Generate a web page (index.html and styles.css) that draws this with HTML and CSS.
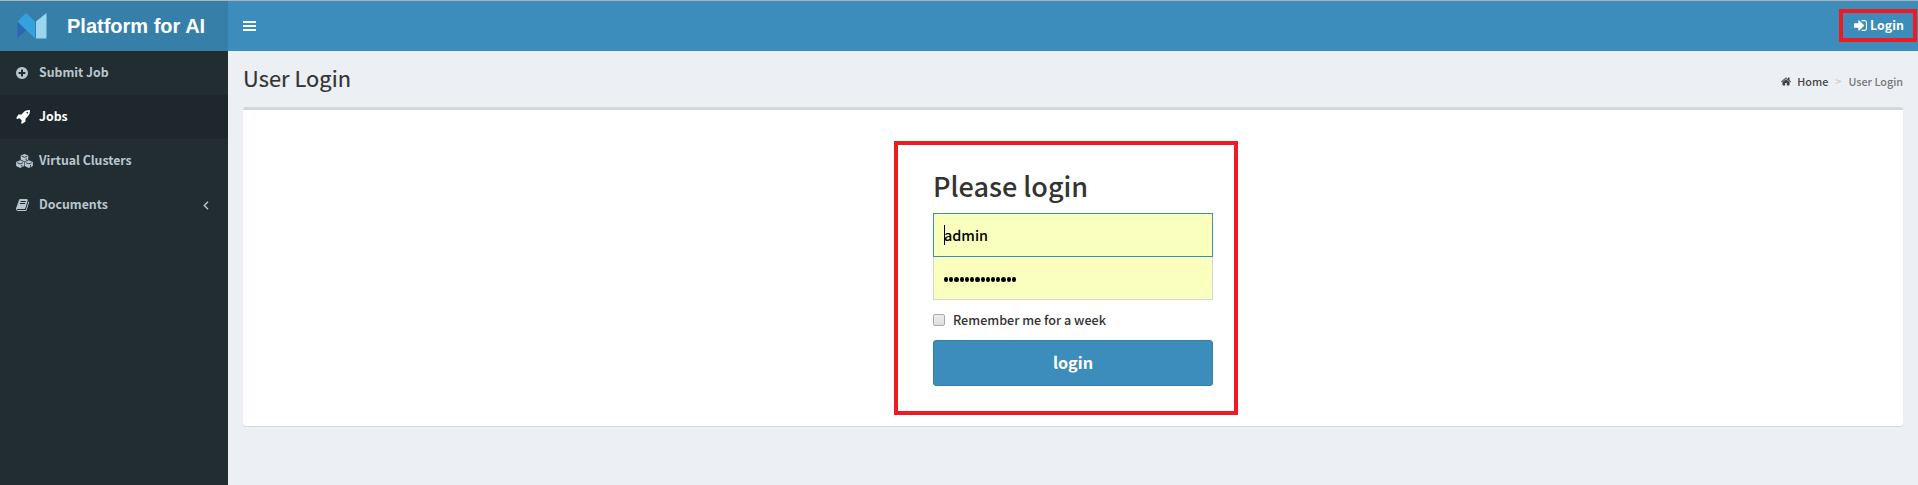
FILE: index.html
```html
<!DOCTYPE html>
<html lang="en">
<head>
<meta charset="utf-8">
<title>Platform for AI</title>
<link rel="stylesheet" href="styles.css">
</head>
<body>
<header class="header">
  <a class="brand">
    <svg class="logo" viewBox="0 0 30 26"><path fill="#2b67b5" d="M.5 8.500 9.500 17 .5 25z"/><path fill="#35a1de" d="M.5 8.500 9 0 18 8.500V25.500L.5 8.500z"/><path fill="#9ad6f0" d="M19 8.500 29.500 0V25.500H19z"/></svg>
    <span class="brand-name">Platform for AI</span>
  </a>
  <nav class="navbar">
    <span class="toggle"><i></i><i></i><i></i></span>
    <a class="login-link"><svg class="signin-icon" viewBox="128 128 1536 1536"><path d="M1312 896q0 26-19 45l-544 544q-19 19-45 19t-45-19-19-45v-288h-448q-26 0-45-19t-19-45v-384q0-26 19-45t45-19h448v-288q0-26 19-45t45-19 45 19l544 544q19 19 19 45zm352-352v704q0 119-84.500 203.500t-203.500 84.500h-320q-13 0-22.500-9.500t-9.500-22.500q0-4-1-20t-.5-26.500 3-23.500 10-19.500 20.500-6.500h320q66 0 113-47t47-113v-704q0-66-47-113t-113-47h-312l-11.500-1-11.500-3-8-5.500-7-9-2-13.500q0-4-1-20t-.5-26.500 3-23.500 10-19.500 20.500-6.500h320q119 0 203.500 84.500t84.500 203.500z"/></svg><span>Login</span></a>
  </nav>
</header>
<div class="body">
  <aside class="sidebar">
    <a class="item"><svg class="icon plus" viewBox="0 0 1536 1536"><path d="M1216 832v-128q0-26-19-45t-45-19h-256v-256q0-26-19-45t-45-19h-128q-26 0-45 19t-19 45v256h-256q-26 0-45 19t-19 45v128q0 26 19 45t45 19h256v256q0 26 19 45t45 19h128q26 0 45-19t19-45v-256h256q26 0 45-19t19-45zm320-64q0 209-103 385.500t-279.500 279.500-385.500 103-385.500-103-279.500-279.500-103-385.500 103-385.500 279.500-279.500 385.500-103 385.500 103 279.500 279.500 103 385.500z"/></svg><span class="label">Submit Job</span></a>
    <a class="item active"><svg class="icon rocket" viewBox="0 128 1664 1664"><path d="M1440 448q0-40-28-68t-68-28-68 28-28 68 28 68 68 28 68-28 28-68zm224-288q0 249-75.500 430.500t-253.500 360.500q-81 80-195 176l-20 379q-2 16-16 26l-384 224q-7 4-16 4-12 0-23-9l-64-64q-13-14-8-32l85-276-281-281-276 85q-3 1-9 1-14 0-23-9l-64-64q-17-19-5-39l224-384q10-14 26-16l379-20q96-114 176-195 188-187 358-258t431-71q14 0 24 9.500t10 22.500z"/></svg><span class="label">Jobs</span></a>
    <a class="item"><svg class="icon cubes" viewBox="0 0 17 14"><g class="cube"><path d="M8.500 0 12.300 1.500V5.600L8.500 7.400 4.700 5.600V1.500z"/><path d="M4.200 6.300 8.200 8v4.100L4.200 14 .1 12.100V8z"/><path d="M12.800 6.300 16.900 8v4.100L12.800 14 8.800 12.100V8z"/></g><g class="cube-lines"><path d="M5.700 2.100 8.500 3.300l2.800-1.200M1.300 8.700l2.900 1.200L7 8.700M10 8.700l2.800 1.200 2.900-1.200M10.200 4.300v1.800M5.900 10.900v1.800M14.500 10.900v1.800"/></g></svg><span class="label">Virtual Clusters</span></a>
    <a class="item"><svg class="icon book" viewBox="64 128 1664 1536"><path d="M1703 478q40 57 18 129l-275 906q-19 64-76.500 107.500t-122.500 43.500h-923q-77 0-148.500-53.500t-99.500-131.500q-24-67-2-127 0-4 3-27t4-37q1-8-3-21.500t-3-19.500q2-11 8-21t16.500-23.500 16.500-23.500q23-38 45-91.500t30-91.500q3-10 .5-30t-.5-28q3-11 17-28t17-23q21-36 42-92t25-90q1-9-2.500-32t.5-28q4-13 22-30.500t22-22.500q19-26 42.500-84.500t27.500-96.500q1-8-3-25.500t-2-26.500q2-8 9-18t18-23 17-21q8-12 16.500-30.500t15-35 16-36 19.500-32 26.500-23.500 36-11.500 47.500 5.500l-1 3q38-9 51-9h761q74 0 114 56t18 130l-274 906q-36 119-71.500 153.500t-128.500 34.500h-869q-27 0-38 15-11 16-1 43 24 70 144 70h923q29 0 56-15.500t35-41.500l300-987q7-22 5-57 38 15 59 43zm-1064 2q-4 13 2 22.500t20 9.500h608q13 0 25.500-9.500t16.500-22.500l21-64q4-13-2-22.500t-20-9.500h-608q-13 0-25.500 9.500t-16.500 22.500zm-83 256q-4 13 2 22.500t20 9.500h608q13 0 25.500-9.500t16.500-22.500l21-64q4-13-2-22.500t-20-9.500h-608q-13 0-25.500 9.500t-16.500 22.500z"/></svg><span class="label">Documents</span><svg class="chevron" viewBox="0 0 6 9"><path d="M5 .8 1.300 4.500 5 8.200"/></svg></a>
  </aside>
  <main class="content">
    <div class="page-head">
      <h1 class="title">User Login</h1>
      <div class="crumbs"><svg class="home-icon" viewBox="89 253 1614 1283"><path d="M1472 992v480q0 26-19 45t-45 19h-384v-384h-256v384h-384q-26 0-45-19t-19-45v-480q0-1 .5-3t.5-3l575-474 575 474q1 2 1 6zm223-69l-62 74q-8 9-21 11h-3q-13 0-21-7l-692-577-692 577q-12 8-24 7-13-2-21-11l-62-74q-8-10-7-23.500t11-21.500l719-599q32-26 76-26t76 26l244 204v-195q0-14 9-23t23-9h192q14 0 23 9t9 23v408l219 182q10 8 11 21.500t-7 23.500z"/></svg><span class="home">Home</span><span class="sep">&gt;</span><span class="here">User Login</span></div>
    </div>
    <section class="box">
      <form class="login-panel">
        <h2 class="form-title">Please login</h2>
        <div class="field user"><i class="caret"></i><span>admin</span></div>
        <div class="field pass"><i class="dot"></i><i class="dot"></i><i class="dot"></i><i class="dot"></i><i class="dot"></i><i class="dot"></i><i class="dot"></i><i class="dot"></i><i class="dot"></i><i class="dot"></i><i class="dot"></i><i class="dot"></i><i class="dot"></i><i class="dot"></i></div>
        <label class="remember"><i class="check"></i><span>Remember me for a week</span></label>
        <button class="submit" type="button">login</button>
      </form>
    </section>
  </main>
</div>
</body>
</html>
```
FILE: styles.css
```css
* { box-sizing: border-box; }
body {
  margin: 0;
  width: 1918px;
  height: 485px;
  overflow: hidden;
  border-top: 1px solid #b3b3b3;
  background: #ecf0f5;
  color: #333;
  font-family: "Noto Sans CJK SC", "Noto Sans", sans-serif;
  font-size: 12.6px;
  font-weight: 500;
}
.header { display: flex; height: 50px; }
.brand { display: flex; width: 228px; padding: 12px 0 0 17px; background: #367fa9; color: #fff; }
.logo { width: 30px; height: 26px; }
.brand-name { margin: -12px 0 0 20px; font: bold 20px/51px "Liberation Sans", Arial, sans-serif; white-space: nowrap; }
.navbar { display: flex; flex: 1; justify-content: space-between; background: #3c8dbc; color: #fff; }
.toggle { display: grid; row-gap: 2px; align-content: start; padding: 20px 0 0 15px; }
.toggle i { width: 13px; height: 2px; background: #fff; }
.login-link {
  display: flex; align-items: center; gap: 3px;
  width: 78px; height: 33px; margin: 8px 1px 0 0; padding-left: 11px;
  border: 4px solid #ed1c24; font-size: 12.4px; font-weight: 700; white-space: nowrap;
}
.login-link span { padding-bottom: 1px; }
.signin-icon { width: 13px; height: 13px; fill: currentColor; }
.body { display: flex; height: 434px; }
.sidebar { width: 228px; background: #222d32; }
.item { display: flex; align-items: center; height: 44px; padding: 0 19px 0 16px; color: #b8c7ce; font-size: 12.3px; font-weight: 700; }
.item.active { background: #1e282c; color: #fff; }
.icon { height: 14px; fill: currentColor; }
.label { flex: 1; padding-bottom: 2px; white-space: nowrap; }
.plus { width: 12px; height: 12px; margin-right: 11px; }
.rocket { width: 14px; margin-right: 9px; }
.cubes { width: 17px; margin-right: 6px; }
.book { width: 13px; height: 12px; margin-right: 10px; }
.cube-lines { fill: none; stroke: #222d32; stroke-width: .9; }
.chevron { width: 6px; height: 9px; fill: none; stroke: currentColor; stroke-width: 1.4; }
.content { flex: 1; padding: 0 15px; }
.page-head { display: flex; justify-content: space-between; height: 56px; }
.title { margin: 0; font-size: 21.8px; font-weight: 400; line-height: 53px; letter-spacing: .05px; -webkit-text-stroke: .2px #333; }
.crumbs { display: flex; align-items: center; height: 60px; font-size: 10.8px; color: #777; }
.home-icon { width: 10px; height: 9px; margin-right: 6px; fill: #444; }
.home { color: #444; }
.sep { padding: 0 7px; color: #ccc; }
.box { height: 319px; padding-top: 31px; border-top: 3px solid #d2d6de; border-radius: 3px; background: #fff; box-shadow: 0 1px 1px rgba(0,0,0,.1); }
.login-panel { width: 344px; height: 274px; margin-left: 651px; padding: 19px 21px 0 35px; border: 4px solid #ed1c24; }
.form-title { margin: 0; height: 49px; font-size: 27px; font-weight: 500; line-height: 44px; }
.field { display: flex; align-items: center; width: 280px; height: 44px; padding: 0 10px; border: 1px solid #d2d6de; background: #faffbd; color: #000; font-size: 14.4px; }
.user { position: relative; border-color: #3c8dbc; }
.user span { padding-bottom: 1px; }
.caret { width: 1px; height: 20px; margin-right: -1px; background: #000; }
.pass { margin-top: -1px; padding-top: 2px; gap: 1px; }
.dot { width: 4.230px; height: 5px; border-radius: 50%; background: #000; }
.remember { display: flex; align-items: center; height: 40px; gap: 8px; }
.remember span { padding-bottom: 1px; }
.check { width: 12px; height: 12px; border: 1px solid #aaa; border-radius: 2px; background: linear-gradient(#ededed, #dedede); }
.submit { display: block; width: 280px; height: 46px; padding: 0 0 2px; border: 1px solid #367fa9; border-radius: 3px; background: #3c8dbc; color: #fff; font: 700 16.2px "Noto Sans CJK SC", "Noto Sans", sans-serif; }
```
